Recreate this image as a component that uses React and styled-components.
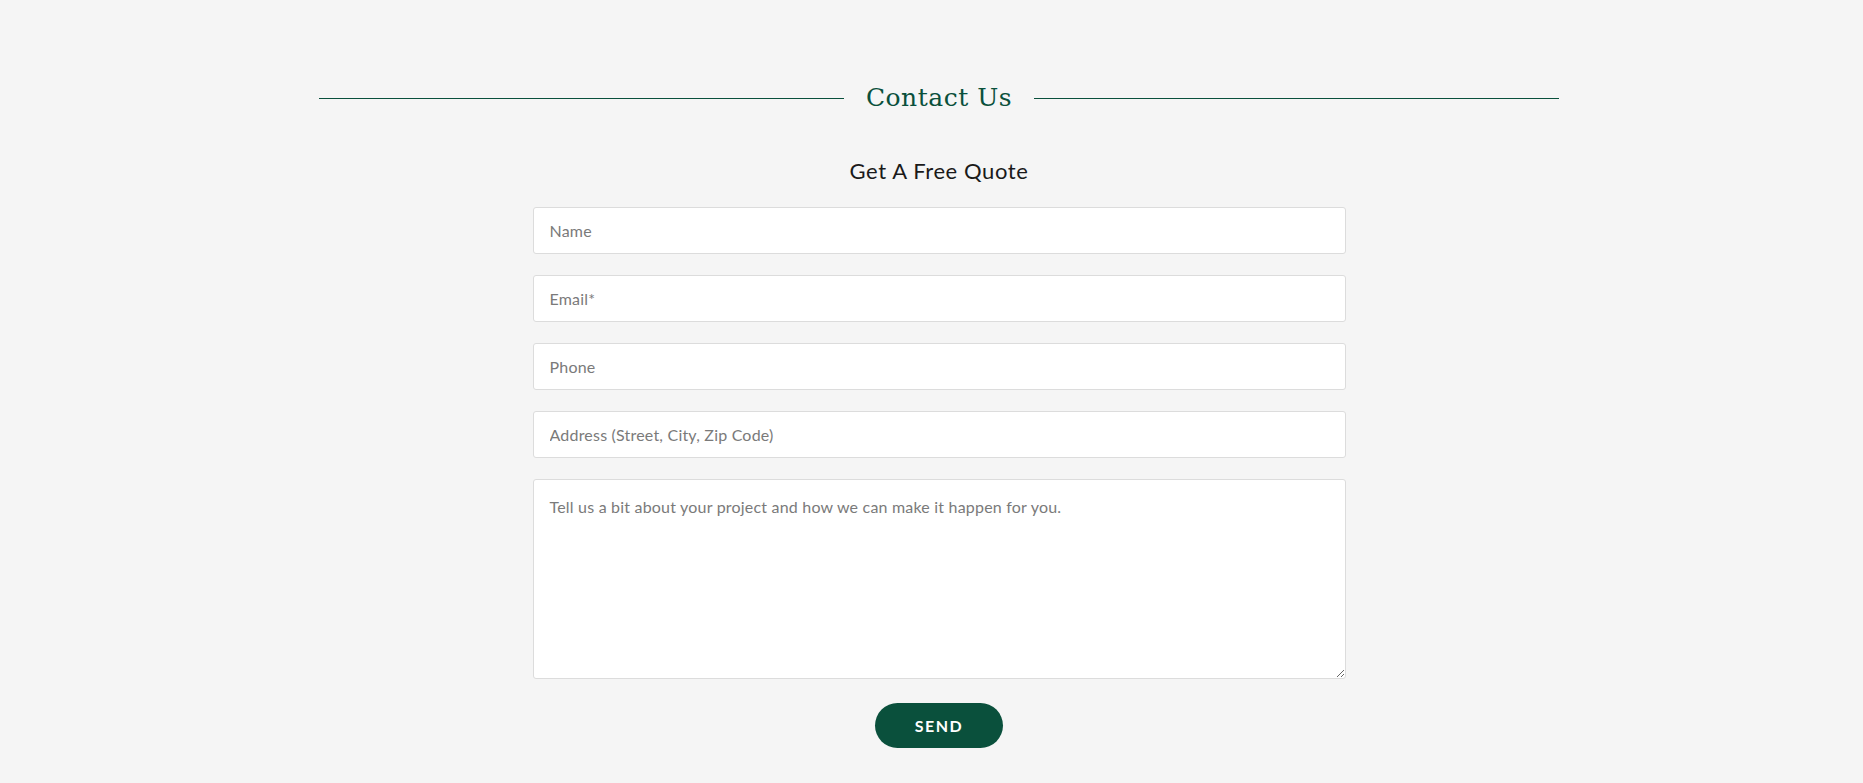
import React, {useState} from 'react'
import styled, {createGlobalStyle} from 'styled-components'

const green = '#0a503c'

const GlobalStyle = createGlobalStyle`
  html, body {
    margin: 0;
    padding: 0;
    background: #f5f5f5;
  }
  body {
    font-family: Lato, "Open Sans", sans-serif;
  }
`
const Page = styled.div`
  min-height: 783px;
  padding: 78px 0 0 15px;
  box-sizing: border-box;
  display: flex;
  flex-direction: column;
  align-items: center;
`
const Heading = styled.div`
  width: 1240px;
  display: flex;
  align-items: center;
  gap: 22px;
`
const Rule = styled.span`
  flex: 1;
  height: 1px;
  background: ${green};
  margin-top: 1px;
`
const Title = styled.h1`
  margin: 0;
  font-family: "DejaVu Serif", "Liberation Serif", serif;
  font-weight: 300;
  font-size: 25px;
  letter-spacing: 0.5px;
  color: ${green};
  line-height: 40px;
`
const SubTitle = styled.h2`
  margin: 39px 0 23px;
  font-family: Lato, sans-serif;
  font-weight: 400;
  font-size: 22px;
  letter-spacing: 0.6px;
  color: #1a1a1a;
`
const Form = styled.form`
  width: 813px;
  display: flex;
  flex-direction: column;
  align-items: center;
  gap: 21px;
`
const Input = styled.input`
  width: 100%;
  height: 47px;
  box-sizing: border-box;
  border: 1px solid #dcdcdc;
  border-radius: 3px;
  background: #fff;
  padding: 0 16px;
  font-family: Lato, sans-serif;
  font-size: 16px;
  letter-spacing: 0.2px;
  color: #333;
  &::placeholder { color: #7a7a7a; }
  &:focus { outline: none; }
`
const TextArea = styled.textarea`
  width: 100%;
  height: 200px;
  box-sizing: border-box;
  border: 1px solid #dcdcdc;
  border-radius: 3px;
  background: #fff;
  padding: 17px 16px;
  font-family: Lato, sans-serif;
  font-size: 16px;
  letter-spacing: 0.2px;
  color: #333;
  &::placeholder { color: #7a7a7a; }
  &:focus { outline: none; }
`
const Button = styled.button`
  width: 128px;
  height: 45px;
  margin-top: 3px;
  border: none;
  border-radius: 23px;
  background: ${green};
  color: #fff;
  font-family: Lato, sans-serif;
  font-weight: 700;
  font-size: 16px;
  letter-spacing: 1.5px;
  cursor: pointer;
`

const fields = ['Name', 'Email*', 'Phone', 'Address (Street, City, Zip Code)']

const App = () => {
  const [data, setData] = useState({})
  return (
    <Page>
      <GlobalStyle/>
      <Heading>
        <Rule/>
        <Title>Contact Us</Title>
        <Rule/>
      </Heading>
      <SubTitle>Get A Free Quote</SubTitle>
      <Form onSubmit={e => e.preventDefault()}>
        {fields.map(f => (
          <Input key={f} placeholder={f} value={data[f] || ''} onChange={e => setData({...data, [f]: e.target.value})}/>
        ))}
        <TextArea placeholder={'Tell us a bit about your project and how we can make it happen for you.'}/>
        <Button type='submit'>SEND</Button>
      </Form>
    </Page>
  )
}
export default App
